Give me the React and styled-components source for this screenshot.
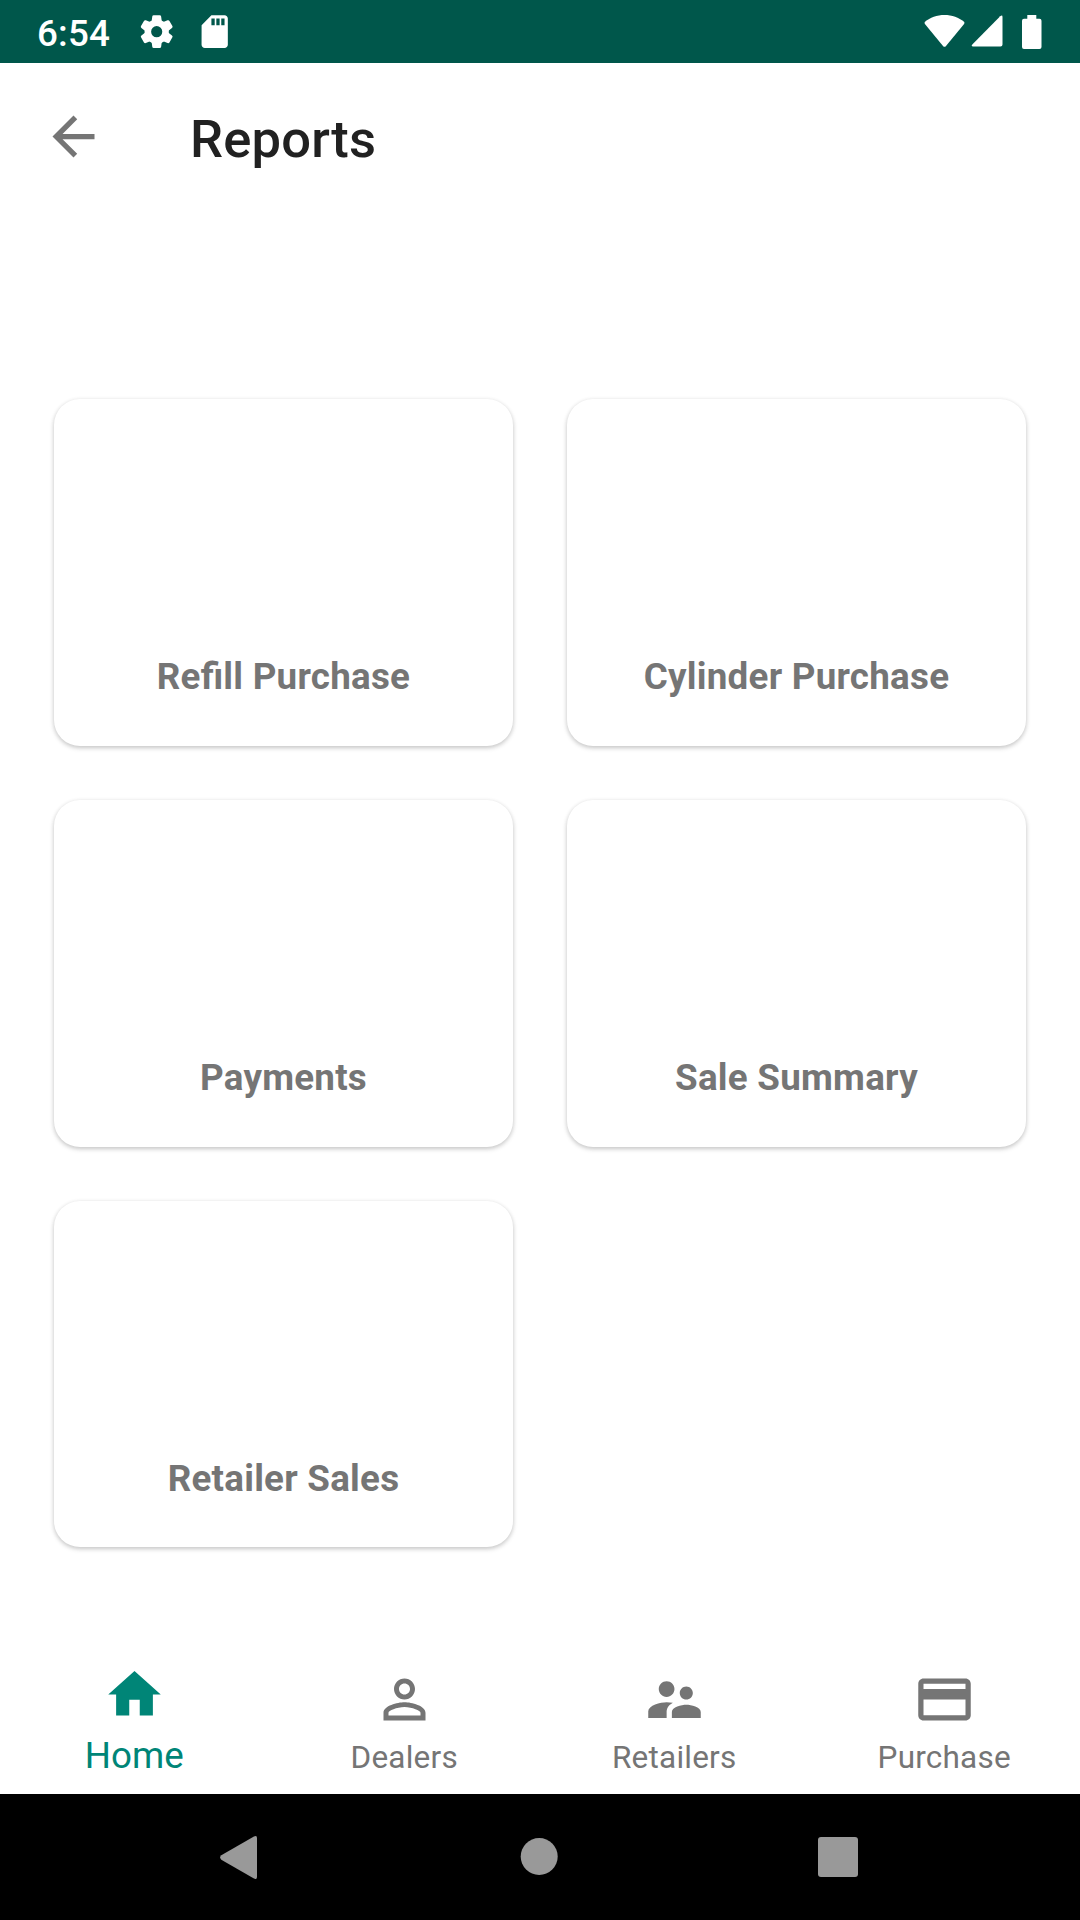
import React from "react";
import styled, { createGlobalStyle } from "styled-components";

const GlobalStyle = createGlobalStyle`
  * { box-sizing: border-box; }
  body { margin: 0; background: #fff; font-family: Roboto, sans-serif; }
`;

const Screen = styled.div`
  display: flex;
  flex-direction: column;
  width: 1080px;
  height: 1920px;
  background: #fff;
  overflow: hidden;
`;

const StatusBar = styled.header`
  display: flex;
  align-items: center;
  justify-content: space-between;
  flex: none;
  height: 63px;
  padding: 0 38.5px 0 37px;
  background: #00574b;
  color: #fff;
`;

const StatusGroup = styled.div`
  display: flex;
  align-items: center;
`;

const Clock = styled.span`
  width: 100px;
  padding-top: 4px;
  font-size: 36.75px;
  font-weight: 500;
  line-height: 44px;
  letter-spacing: 0.2px;
  white-space: nowrap;
`;

const Icon = styled.svg`
  display: block;
  flex: none;
  width: ${(p) => p.$w}px;
  height: ${(p) => p.$h ?? p.$w}px;
  margin-left: ${(p) => p.$gap ?? 0}px;
  fill: currentColor;
`;

const Toolbar = styled.div`
  display: flex;
  align-items: center;
  flex: none;
  height: 147px;
  padding-left: 42px;
`;

const BackButton = styled.button`
  display: flex;
  padding: 0;
  border: 0;
  background: none;
  color: #757575;
`;

const Title = styled.h1`
  margin: 4px 0 0 85px;
  color: #212121;
  font-size: 52.5px;
  font-weight: 500;
  line-height: 62px;
  letter-spacing: 0.2px;
`;

const Content = styled.main`
  flex: 1;
  padding: 189px 54px 0;
`;

const CardGrid = styled.div`
  display: grid;
  grid-template-columns: 459px 459px;
  grid-template-rows: 347px 347px 346px;
  gap: 54px;
`;

const Card = styled.section`
  display: flex;
  justify-content: center;
  padding-top: 256px;
  border-radius: 26px;
  background: #fff;
  box-shadow: 0 2px 5px rgba(0, 0, 0, 0.18), 0 1px 4px rgba(0, 0, 0, 0.08);
`;

const CardLabel = styled.span`
  color: #757575;
  font-size: 36.75px;
  font-weight: 700;
  line-height: 44px;
  letter-spacing: 0.25px;
  font-feature-settings: "liga" 1;
`;

const BottomNav = styled.nav`
  display: grid;
  grid-template-columns: repeat(4, 270px);
  flex: none;
  height: 147px;
  margin-left: -0.8px;
`;

const NavItem = styled.div`
  display: flex;
  flex-direction: column;
  align-items: center;
  justify-content: space-between;
  padding: ${(p) => (p.$active ? 16 : 21)}px 0 ${(p) => (p.$active ? 15 : 16)}px;
  color: ${(p) => (p.$active ? "#008577" : "#757575")};
`;

const NavLabel = styled.span`
  font-size: ${(p) => (p.$active ? 36.75 : 31.5)}px;
  line-height: ${(p) => (p.$active ? 46 : 40)}px;
  letter-spacing: ${(p) => (p.$active ? 0 : 0.22)}px;
`;

const SystemBar = styled.footer`
  display: flex;
  align-items: center;
  justify-content: space-between;
  flex: none;
  height: 126px;
  padding: 0 222px 0 220px;
  background: #000;
  color: #999;
`;

const PATHS = {
  sdCard: "M18 2h-8L4.02 8 4 20c0 1.1.9 2 2 2h12c1.1 0 2-.9 2-2V4c0-1.1-.9-2-2-2zm-6 6h-2V4h2v4zm3 0h-2V4h2v4zm3 0h-2V4h2v4z",
  back: "M20 11H7.83l5.59-5.59L12 4l-8 8 8 8 1.41-1.41L7.83 13H20v-2z",
  home: "M10 20v-6h4v6h5v-8h3L12 3 2 12h3v8z",
  person: "M12 5.9c1.16 0 2.1.94 2.1 2.1s-.94 2.1-2.1 2.1S9.9 9.16 9.9 8s.94-2.1 2.1-2.1m0 9c2.97 0 6.1 1.46 6.1 2.1v1.1H5.9V17c0-.64 3.13-2.1 6.1-2.1M12 4C9.79 4 8 5.79 8 8s1.79 4 4 4 4-1.79 4-4-1.79-4-4-4zm0 9c-2.67 0-8 1.34-8 4v3h16v-3c0-2.66-5.33-4-8-4z",
  people: "M16.5 12c1.38 0 2.49-1.12 2.49-2.5S17.88 7 16.5 7C15.12 7 14 8.12 14 9.5s1.12 2.5 2.5 2.5zM9 11c1.66 0 2.99-1.34 2.99-3S10.66 5 9 5C7.34 5 6 6.34 6 8s1.34 3 3 3zm7.5 3c-1.83 0-5.5.92-5.5 2.75V19h11v-2.25c0-1.83-3.67-2.75-5.5-2.75zM9 13c-2.33 0-7 1.17-7 3.5V19h7v-2.25c0-.85.33-2.34 2.37-3.47C10.5 13.1 9.66 13 9 13z",
  card: "M20 4H4c-1.11 0-1.99.89-1.99 2L2 18c0 1.11.89 2 2 2h16c1.11 0 2-.89 2-2V6c0-1.11-.89-2-2-2zm0 14H4v-6h16v6zm0-10H4V6h16v2z",
};

const TEETH = [0, 60, 120, 180, 240, 300];

const REPORTS = ["Refill Purchase", "Cylinder Purchase", "Payments", "Sale Summary", "Retailer Sales"];

const TABS = [
  { label: "Home", icon: "home", active: true },
  { label: "Dealers", icon: "person" },
  { label: "Retailers", icon: "people" },
  { label: "Purchase", icon: "card" },
];

function Glyph({ name, size, gap }) {
  return (
    <Icon $w={size} $gap={gap} viewBox="0 0 24 24" aria-hidden="true">
      <path fillRule="evenodd" d={PATHS[name]} />
    </Icon>
  );
}

export default function App() {
  return (
    <Screen>
      <GlobalStyle />
      <StatusBar>
        <StatusGroup>
          <Clock>6:54</Clock>
          <Icon $w={39.4} $gap={0.3} viewBox="0 0 24 24" aria-hidden="true">
            {TEETH.map((angle) => (
              <path
                key={angle}
                transform={`rotate(${angle} 12 12)`}
                d="M8.7 7.2 9.3 2.8Q9.4 2 10.2 2h3.6q.8 0 .9.8l.6 4.4z"
              />
            ))}
            <circle cx="12" cy="12" r="5.4" fill="none" stroke="currentColor" strokeWidth="4" />
          </Icon>
          <Glyph name="sdCard" size={39.4} gap={18.7} />
        </StatusGroup>
        <StatusGroup>
          <Icon $w={41} $h={34} viewBox="0 0 41 34">
            <path d="M1 6.8Q0 7.8.9 9L19 31q1.5 1.7 3 0L40.1 9q.9-1.2-.1-2.2C34.8 2.4 28 0 20.5 0S6 2.4 1 6.8z" />
          </Icon>
          <Icon $w={32} $h={34} $gap={5.5} viewBox="0 0 32 34">
            <path d="M29.2 1.300Q31.500-.5 31.500 2v27.500q0 2-2 2H2.200Q-.3 31.500 1.300 29.500z" />
          </Icon>
          <Icon $w={19.5} $h={34} $gap={19.5} viewBox="0 0 19.5 34">
            <path d="M5.3 0h9v3.7h3.2q2 0 2 2V32q0 2-2 2H2q-2 0-2-2V5.7q0-2 2-2h3.3z" />
          </Icon>
        </StatusGroup>
      </StatusBar>
      <Toolbar>
        <BackButton aria-label="Back">
          <Glyph name="back" size={63} />
        </BackButton>
        <Title>Reports</Title>
      </Toolbar>
      <Content>
        <CardGrid>
          {REPORTS.map((name) => (
            <Card key={name}>
              <CardLabel>{name}</CardLabel>
            </Card>
          ))}
        </CardGrid>
      </Content>
      <BottomNav>
        {TABS.map(({ label, icon, active }) => (
          <NavItem key={label} $active={active}>
            <Glyph name={icon} size={63} />
            <NavLabel $active={active}>{label}</NavLabel>
          </NavItem>
        ))}
      </BottomNav>
      <SystemBar>
        <Icon $w={37} $h={43} viewBox="0 0 37 43">
          <path d="M33.5.8Q37-1.2 37 2v39q0 3.200-3.500 1.200L1.300 23.700Q-1 21.500 1.300 19.300z" />
        </Icon>
        <Icon $w={38} $gap={3} viewBox="0 0 38 38">
          <circle cx="19.2" cy="18.5" r="18.5" />
        </Icon>
        <Icon $w={40} viewBox="0 0 40 40">
          <rect width="40" height="40" rx="3" />
        </Icon>
      </SystemBar>
    </Screen>
  );
}
